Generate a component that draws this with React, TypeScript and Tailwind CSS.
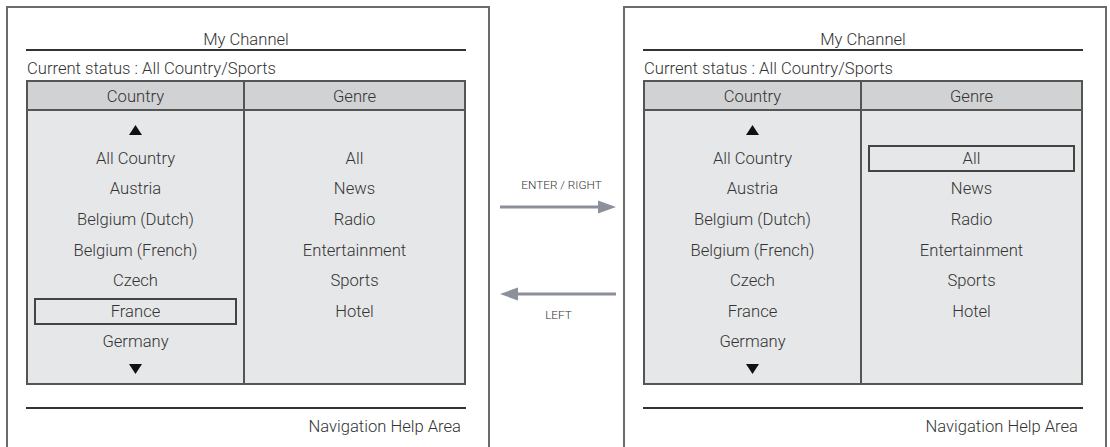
const countries = [
  "All Country",
  "Austria",
  "Belgium (Dutch)",
  "Belgium (French)",
  "Czech",
  "France",
  "Germany",
];

const genres = ["All", "News", "Radio", "Entertainment", "Sports", "Hotel"];

function Row({ label, selected }: { label: string; selected?: boolean }) {
  return (
    <div className="h-[30.6px] flex items-center justify-center">
      {selected ? (
        <div className="mx-[6px] w-full h-[27px] pt-[2px] border-2 border-[#444] flex items-center justify-center">
          {label}
        </div>
      ) : (
        <span className="pt-[2px]">{label}</span>
      )}
    </div>
  );
}

function Triangle({ up }: { up?: boolean }) {
  return (
    <svg width="13" height="10" viewBox="0 0 13 10">
      <polygon points={up ? "6.5,0 13,10 0,10" : "0,0 13,0 6.5,10"} fill="#111" />
    </svg>
  );
}

function Panel({ country, genre }: { country?: string; genre?: string }) {
  return (
    <div className="w-[484px] h-[441px] border-2 border-b-0 border-[#6b6b6b] pl-[18px] pr-[22px] shrink-0">
      <div className="pt-[22px] leading-[19px] text-center border-b-2 border-[#333]">My Channel</div>
      <div className="mt-[8px] leading-[19px] pl-[1px]">Current status : All Country/Sports</div>
      <div className="mt-[2px] border-2 border-[#555]">
        <div className="flex h-[29px] bg-[#d1d2d4] border-b-2 border-[#555]">
          <div className="w-[217px] pt-[3px] border-r-2 border-[#555] flex items-center justify-center">Country</div>
          <div className="flex-1 pt-[3px] flex items-center justify-center">Genre</div>
        </div>
        <div className="flex h-[272px] bg-[#e6e7e8]">
          <div className="w-[217px] border-r-2 border-[#555] flex flex-col">
            <div className="h-[32px] flex justify-center pt-[14px]">
              <Triangle up />
            </div>
            {countries.map((c) => (
              <Row key={c} label={c} selected={c === country} />
            ))}
            <div className="flex justify-center pt-[7px]">
              <Triangle />
            </div>
          </div>
          <div className="flex-1 flex flex-col">
            <div className="h-[32px]" />
            {genres.map((g) => (
              <Row key={g} label={g} selected={g === genre} />
            ))}
          </div>
        </div>
      </div>
      <div className="mt-[22px] border-t-2 border-[#333]" />
      <div className="pt-[8px] leading-[20px] text-right pr-[5px]">Navigation Help Area</div>
    </div>
  );
}

function Arrow({ left }: { left?: boolean }) {
  return (
    <svg width="116" height="14" viewBox="0 0 116 14">
      {left ? (
        <>
          <rect x="16" y="5.5" width="100" height="3" fill="#8b909b" />
          <polygon points="0,7 18,0.5 18,13.5" fill="#8b909b" />
        </>
      ) : (
        <>
          <rect x="0" y="5.5" width="100" height="3" fill="#8b909b" />
          <polygon points="116,7 98,0.5 98,13.5" fill="#8b909b" />
        </>
      )}
    </svg>
  );
}

export default function App() {
  return (
    <div
      className="w-[1110px] h-[447px] overflow-hidden bg-white text-[#333] text-[16.6px] font-light pt-[6px] pl-[6px] flex"
      style={{ fontFamily: 'Roboto, "Liberation Sans", Arial, sans-serif' }}
    >
      <Panel country="France" />
      <div className="w-[133px] shrink-0 flex flex-col items-center pt-[172px]">
        <div className="text-[11.8px] leading-[14px] pl-[10px]">ENTER / RIGHT</div>
        <div className="mt-[8px] pl-[2px]">
          <Arrow />
        </div>
        <div className="mt-[73px] pl-[2px]">
          <Arrow left />
        </div>
        <div className="mt-[7px] text-[11.8px] leading-[14px] pl-[4px]">LEFT</div>
      </div>
      <Panel genre="All" />
    </div>
  );
}
